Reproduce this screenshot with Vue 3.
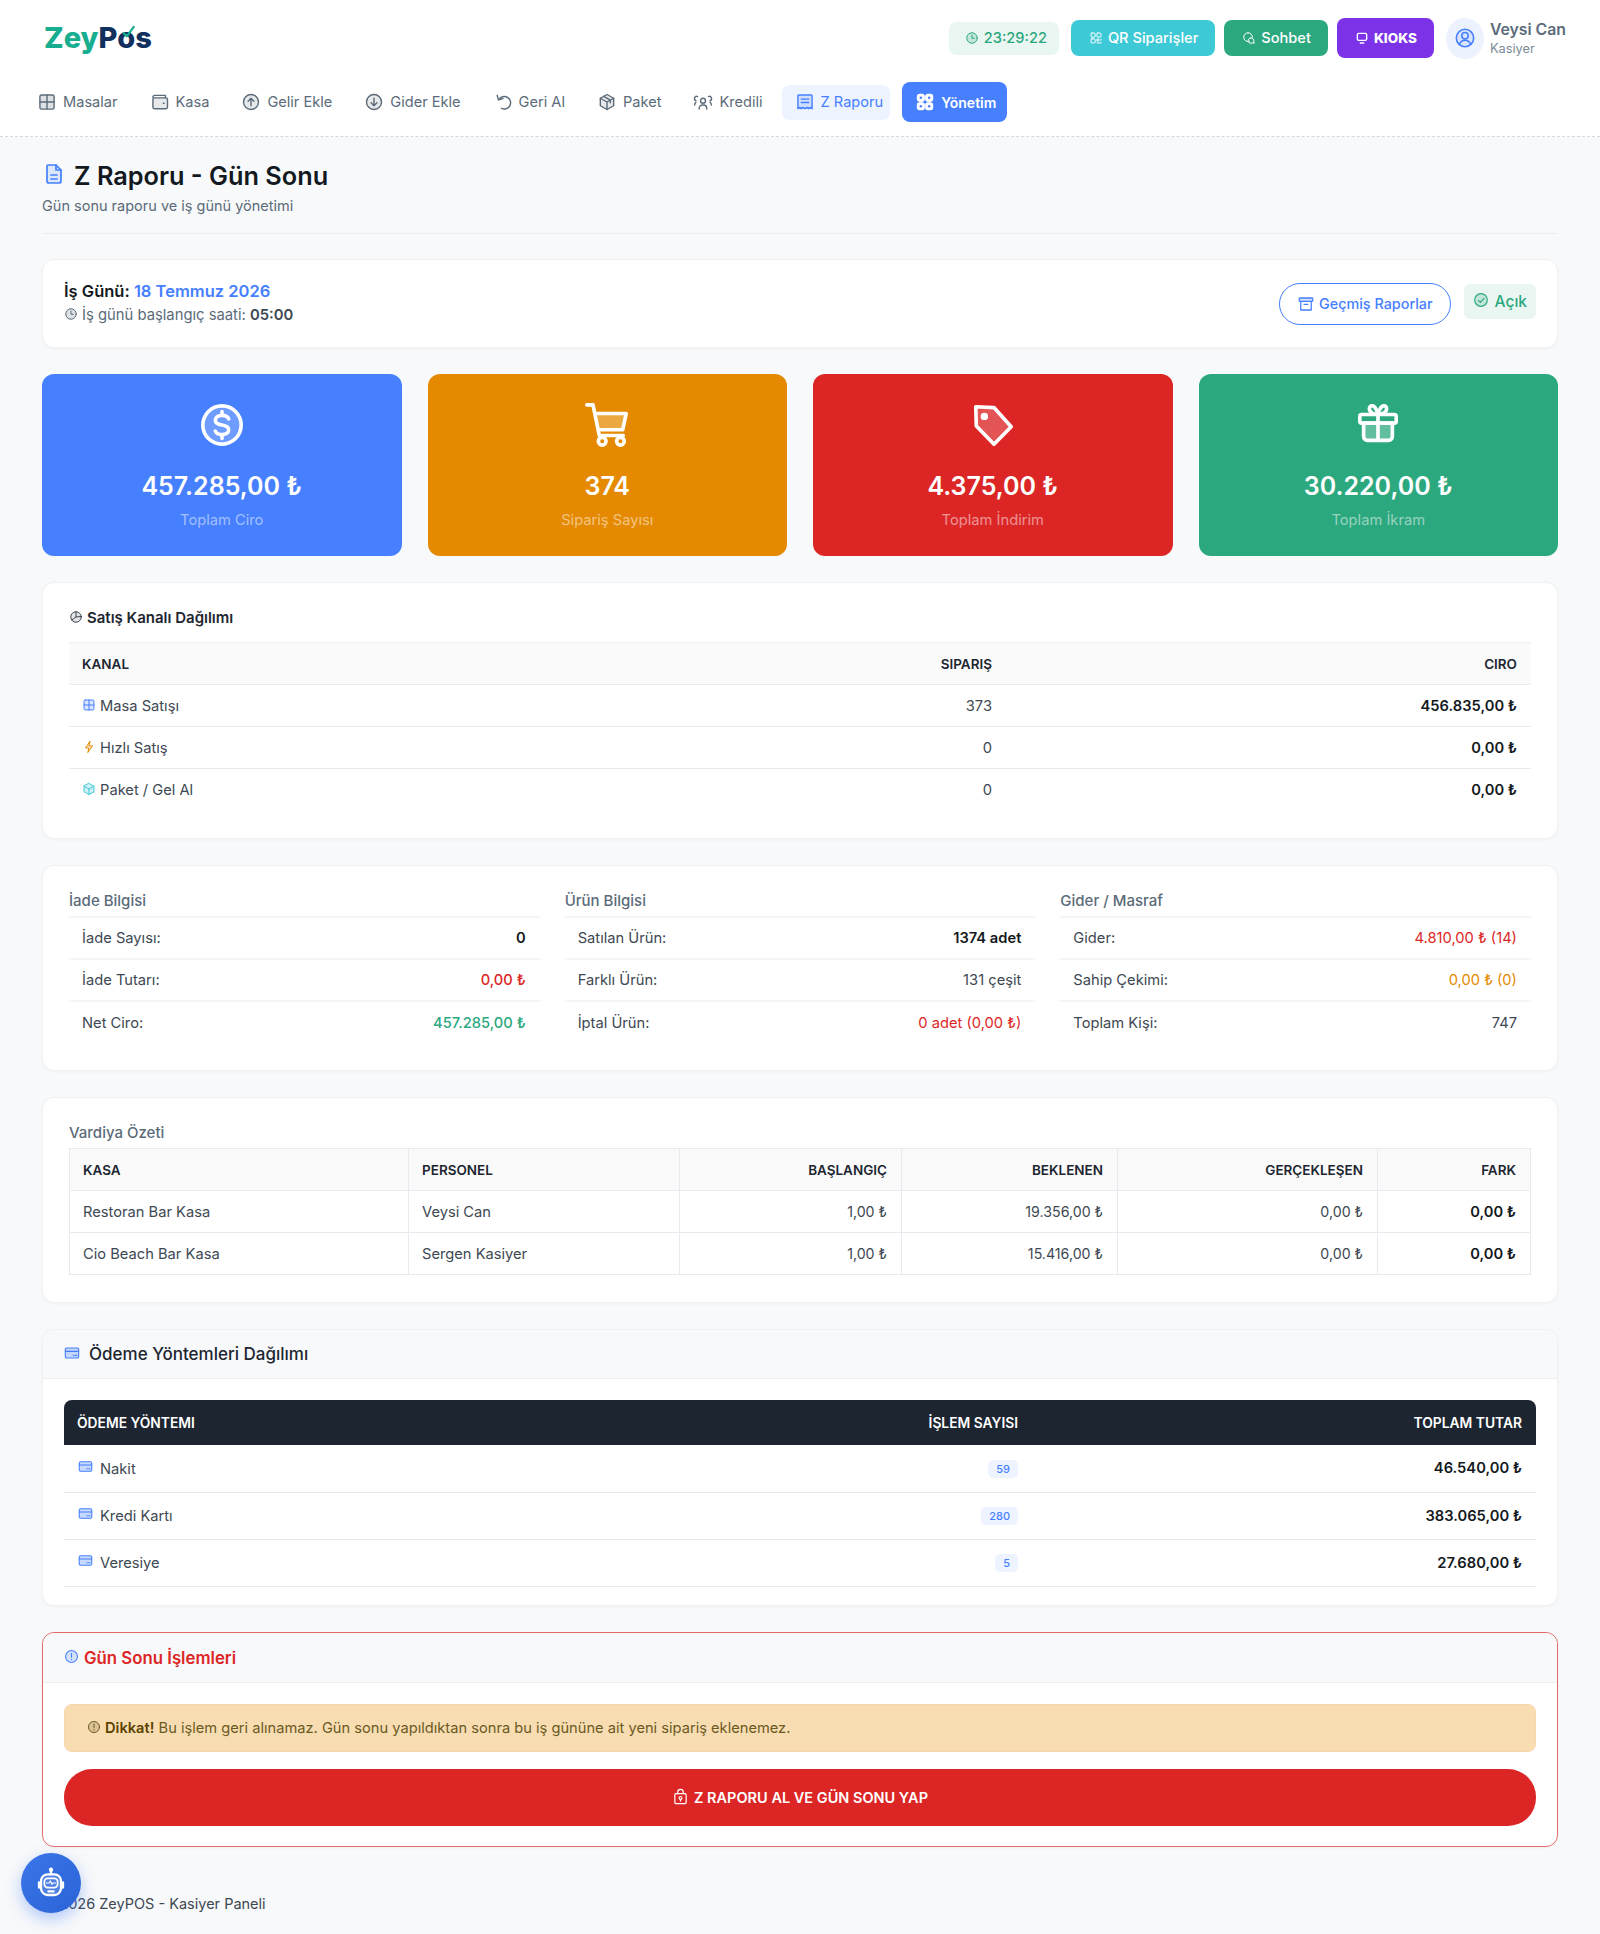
<template>
  <div class="page">
    <header class="header">
      <div class="topbar">
        <div class="logo">
          <span class="logo__zey">Zey</span><span class="logo__pos">P<span class="logo__o">o<svg viewBox="0 0 24 24"><path d="M6 13l5 5L22 3" /></svg></span>s</span>
        </div>
        <div class="topbar__right">
          <div class="clock"><svg class="ico" viewBox="0 0 24 24" v-html="icons.clock" />23:29:22</div>
          <a class="top-btn top-btn--cyan"><svg class="ico" viewBox="0 0 24 24" v-html="icons.qr" />QR Siparişler</a>
          <a class="top-btn top-btn--green"><svg class="ico" viewBox="0 0 24 24" v-html="icons.chat" />Sohbet</a>
          <a class="top-btn top-btn--purple"><svg class="ico" viewBox="0 0 24 24" v-html="icons.screen" />KIOKS</a>
          <div class="avatar"><svg viewBox="0 0 24 24" v-html="icons.user" /></div>
          <div class="user">
            <div class="user__name">Veysi Can</div>
            <div class="user__role">Kasiyer</div>
          </div>
        </div>
      </div>
      <nav class="nav">
        <a
          v-for="item in navItems"
          :key="item.label"
          class="nav__item"
          :class="item.cls"
        >
          <svg class="nav__ico" viewBox="0 0 24 24" v-html="icons[item.icon]" />
          {{ item.label }}
        </a>
      </nav>
    </header>

    <main class="main">
      <div class="title-block">
        <h1 class="title"><svg class="title__ico" viewBox="0 0 24 24" v-html="icons.doc" />Z Raporu - Gün Sonu</h1>
        <p class="subtitle">Gün sonu raporu ve iş günü yönetimi</p>
      </div>

      <section class="card day">
        <div>
          <div class="day__title">İş Günü: <span class="blue">18 Temmuz 2026</span></div>
          <div class="day__sub"><svg class="ico-sm" viewBox="0 0 24 24" v-html="icons.clock" />İş günü başlangıç saati: <b>05:00</b></div>
        </div>
        <div class="day__actions">
          <a class="outline-btn"><svg viewBox="0 0 24 24" v-html="icons.archive" />Geçmiş Raporlar</a>
          <span class="open-tag"><svg viewBox="0 0 24 24" v-html="icons.check" />Açık</span>
        </div>
      </section>

      <div class="stats">
        <div v-for="s in stats" :key="s.label" class="stat" :class="s.cls">
          <svg class="stat__ico" viewBox="0 0 24 24" v-html="icons[s.icon]" />
          <div class="stat__value">{{ s.value }}</div>
          <div class="stat__label">{{ s.label }}</div>
        </div>
      </div>

      <section class="card pad channels">
        <h6 class="sec-title"><svg class="ico-sm" viewBox="0 0 24 24" v-html="icons.pie" />Satış Kanalı Dağılımı</h6>
        <table class="tbl">
          <colgroup>
            <col class="c-channel" />
            <col class="c-orders" />
            <col />
          </colgroup>
          <thead>
            <tr>
              <th>KANAL</th>
              <th class="r">SIPARIŞ</th>
              <th class="r">CIRO</th>
            </tr>
          </thead>
          <tbody>
            <tr v-for="c in channels" :key="c.name">
              <td><svg class="ico-sm" :class="c.color" viewBox="0 0 24 24" v-html="icons[c.icon]" />{{ c.name }}</td>
              <td class="r">{{ c.orders }}</td>
              <td class="r strong">{{ c.total }}</td>
            </tr>
          </tbody>
        </table>
      </section>

      <section class="card pad info">
        <div v-for="col in infoCols" :key="col.title" class="info__col">
          <div class="info__title">{{ col.title }}</div>
          <div v-for="row in col.rows" :key="row.label" class="info__row">
            <span>{{ row.label }}</span>
            <span :class="row.cls">{{ row.value }}</span>
          </div>
        </div>
      </section>

      <section class="card pad shifts">
        <div class="info__title info__title--plain">Vardiya Özeti</div>
        <table class="tbl tbl--bordered">
          <colgroup>
            <col class="c-kasa" />
            <col class="c-person" />
            <col class="c-start" />
            <col class="c-expected" />
            <col class="c-actual" />
            <col />
          </colgroup>
          <thead>
            <tr>
              <th>KASA</th>
              <th>PERSONEL</th>
              <th class="r">BAŞLANGIÇ</th>
              <th class="r">BEKLENEN</th>
              <th class="r">GERÇEKLEŞEN</th>
              <th class="r">FARK</th>
            </tr>
          </thead>
          <tbody>
            <tr v-for="s in shifts" :key="s.kasa">
              <td>{{ s.kasa }}</td>
              <td>{{ s.person }}</td>
              <td class="r">{{ s.start }}</td>
              <td class="r">{{ s.expected }}</td>
              <td class="r">{{ s.actual }}</td>
              <td class="r strong">{{ s.diff }}</td>
            </tr>
          </tbody>
        </table>
      </section>

      <section class="card payments">
        <div class="card__head card__head--pay">
          <svg class="card__ico" viewBox="0 0 24 24" v-html="icons.card" />Ödeme Yöntemleri Dağılımı
        </div>
        <div class="card__body">
          <table class="tbl tbl--dark">
            <colgroup>
              <col class="c-method" />
              <col class="c-count" />
              <col />
            </colgroup>
            <thead>
              <tr>
                <th>ÖDEME YÖNTEMI</th>
                <th class="r">İŞLEM SAYISI</th>
                <th class="r">TOPLAM TUTAR</th>
              </tr>
            </thead>
            <tbody>
              <tr v-for="p in payments" :key="p.name">
                <td><svg class="ico-pay" viewBox="0 0 24 24" v-html="icons.card" />{{ p.name }}</td>
                <td class="r"><span class="count">{{ p.count }}</span></td>
                <td class="r strong">{{ p.total }}</td>
              </tr>
            </tbody>
          </table>
        </div>
      </section>

      <section class="card closing">
        <div class="card__head card__head--red">
          <svg class="ico-info" viewBox="0 0 24 24" v-html="icons.info" />Gün Sonu İşlemleri
        </div>
        <div class="card__body closing__body">
          <div class="alert">
            <svg class="ico-sm" viewBox="0 0 24 24" v-html="icons.info" /><b>Dikkat!</b> Bu işlem geri alınamaz. Gün sonu yapıldıktan sonra bu iş gününe ait yeni sipariş eklenemez.
          </div>
          <button class="close-btn"><svg viewBox="0 0 24 24" v-html="icons.lock" />Z RAPORU AL VE GÜN SONU YAP</button>
        </div>
      </section>

      <footer class="footer">© 2026 ZeyPOS - Kasiyer Paneli</footer>
    </main>

    <button class="bot">
      <svg viewBox="0 0 24 24" v-html="icons.bot" />
    </button>
  </div>
</template>

<script setup>
const icons = {
  grid: '<rect x="3.5" y="3.5" width="17" height="17" rx="2" fill="currentColor" fill-opacity=".2"/><path d="M3.5 12h17M12 3.5v17"/>',
  wallet: '<path d="M3.500 6.500A2.500 2.500 0 0 1 6 4h12.500v3" /><rect x="3.500" y="7" width="17.500" height="13" rx="2" fill="currentColor" fill-opacity=".15"/><path d="M16 13.500h1"/>',
  up: '<circle cx="12" cy="12" r="9" fill="currentColor" fill-opacity=".15"/><path d="M12 16.500v-9M8.500 11 12 7.500l3.500 3.500"/>',
  down: '<circle cx="12" cy="12" r="9" fill="currentColor" fill-opacity=".15"/><path d="M12 7.500v9M8.500 13l3.500 3.500 3.500-3.500"/>',
  undo: '<path d="M5 4l1.500 5.500L12 8"/><path d="M7.200 9A7.500 7.500 0 1 1 10 19.500"/>',
  box: '<path d="M12 3l8 4.500v9L12 21l-8-4.500v-9z" fill="currentColor" fill-opacity=".15"/><path d="M4 7.500l8 4.500 8-4.500M12 12v9M8 5.200l8 4.600v3"/>',
  users: '<circle cx="12" cy="10.500" r="3"/><path d="M7.500 20.500v-1a4 4 0 0 1 4-4h1a4 4 0 0 1 4 4v1"/><path d="M3.500 10.500a2.500 2.500 0 0 1 2-5M2 15.500c0-1.500.5-2.500 1.500-3M20.500 10.500a2.500 2.500 0 0 0-2-5M22 15.500c0-1.500-.5-2.500-1.500-3"/>',
  receipt: '<path d="M3.500 4.500a1 1 0 0 1 1-1h15a1 1 0 0 1 1 1V20l-2-1.500-2 1.500-2-1.500-2.500 1.500-2.500-1.500-2 1.500-2-1.500-2 1.500z" fill="currentColor" fill-opacity=".18"/><path d="M7.500 8.500h9M7.500 12.500h9"/>',
  apps: '<rect x="3" y="3" width="8" height="8" rx="2.500" fill="currentColor"/><rect x="13" y="3" width="8" height="8" rx="2.500" fill="currentColor"/><rect x="3" y="13" width="8" height="8" rx="2.500" fill="currentColor"/><rect x="13" y="13" width="8" height="8" rx="2.500" fill="currentColor"/><circle cx="7" cy="7" r="1.500" fill="#4680ff" stroke="none"/><circle cx="17" cy="7" r="1.500" fill="#4680ff" stroke="none"/><circle cx="7" cy="17" r="1.500" fill="#4680ff" stroke="none"/><circle cx="17" cy="17" r="1.500" fill="#4680ff" stroke="none"/>',
  clock: '<circle cx="12" cy="12" r="9" fill="currentColor" fill-opacity=".2"/><path d="M12 7v5.500h4"/>',
  qr: '<rect x="3.500" y="3.500" width="7" height="7" rx="1.500"/><rect x="13.500" y="3.500" width="7" height="7" rx="1.500"/><rect x="3.500" y="13.500" width="7" height="7" rx="1.500"/><path d="M14 14h3v3h-3zM20.500 14v2M14 20.500h6.500v-1"/>',
  chat: '<path d="M10.500 3a7.500 7.500 0 1 0 0 15c1 0 1.500 0 2.500-.5"/><path d="M10.500 3a7.500 7.500 0 0 1 7.500 7.500" /><path d="M15 12a4.500 4.500 0 1 0 2.500 8.200L21 21l-.9-3.200A4.500 4.500 0 0 0 15 12z"/>',
  screen: '<rect x="4" y="4" width="16" height="12" rx="2.500" stroke-width="2.400"/><path d="M9 20.500h6" stroke-width="2.400"/>',
  user: '<circle cx="12" cy="12" r="9.500" fill="currentColor" fill-opacity=".12"/><circle cx="12" cy="9.500" r="3.500"/><path d="M6 19c.8-3 3-4.500 6-4.500s5.200 1.500 6 4.500"/>',
  doc: '<path d="M6 3h8l5 5v11a2 2 0 0 1-2 2H7a2 2 0 0 1-2-2V4a1 1 0 0 1 1-1z" fill="currentColor" fill-opacity=".15"/><path d="M14 3v5h5M9 13h6M9 17h6"/>',
  archive: '<rect x="3" y="4" width="18" height="4.500" rx="1" fill="currentColor" fill-opacity=".25"/><path d="M5 8.500V20h14V8.500M9.500 12.500h5"/>',
  check: '<circle cx="12" cy="12" r="9.500" fill="currentColor" fill-opacity=".2"/><path d="M8 12.500l3 3 5.500-6"/>',
  dollar: '<circle cx="12" cy="12" r="10" fill="currentColor" fill-opacity=".22"/><path d="M15.500 8.800C15 7.600 13.700 7 12 7c-2 0-3.500 1-3.500 2.500S10 11.700 12 12s3.500 1 3.500 2.500S14 17 12 17c-1.700 0-3-.6-3.500-1.800M12 5v2M12 17v2"/>',
  cart: '<path d="M6.500 6H22l-1.800 8.500H8z" fill="currentColor" fill-opacity=".25" stroke="none"/><path d="M1.500 1.500h3.200L8 17.500h12.500M6 6h16l-1.800 8.500H8"/><circle cx="9.500" cy="20.500" r="2"/><circle cx="19" cy="20.500" r="2"/>',
  tag: '<path d="M3 2.500l9.500.4 9 10L12.500 22 3.300 12.500z" fill="currentColor" fill-opacity=".22"/><circle cx="7.500" cy="7.500" r="1" fill="currentColor"/>',
  gift: '<g transform="translate(0 -1)"><path d="M4.500 12h15v7a2 2 0 0 1-2 2h-11a2 2 0 0 1-2-2z" fill="currentColor" fill-opacity=".25"/><rect x="2.500" y="7.500" width="19" height="4.500" rx="1"/><path d="M12 7.500V21M12 7.500C10 7.500 7.500 6.500 7.500 4.500S10.500 1.500 12 7.500M12 7.500c2 0 4.500-1 4.500-3S13.500 1.500 12 7.500"/></g>',
  pie: '<circle cx="12" cy="12" r="9" fill="currentColor" fill-opacity=".15"/><path d="M12 3v9l-7 5M12 12l9-1"/>',
  bolt: '<path d="M13.500 2.500 6 13.500h5.500L10 21.500l8-11.500h-5.500z" fill="currentColor" fill-opacity=".2"/>',
  cube: '<path d="M12 2.500l8.500 4.800v9.500L12 21.500l-8.500-4.700V7.300z" fill="currentColor" fill-opacity=".25"/><path d="M3.500 7.300 12 12l8.500-4.700M12 12v9.500"/>',
  card: '<rect x="2" y="4.500" width="20" height="15" rx="2" fill="currentColor" fill-opacity=".3"/><path d="M2 9.500h20M14 15.500h1M17 15.500h2"/>',
  info: '<circle cx="12" cy="12" r="9.500" fill="currentColor" fill-opacity=".2"/><path d="M12 7v6M12 16.500v.5"/>',
  lock: '<rect x="4" y="8" width="16" height="14" rx="1.500"/><path d="M8 8V6a4 4 0 0 1 8 0v2"/><circle cx="12" cy="14" r="2"/><path d="M12 16v2.500"/>',
  bot: '<path d="M12 2.500v3" /><circle cx="12" cy="2" r=".8" fill="currentColor"/><rect x="4.500" y="5.500" width="15" height="15.500" rx="5" fill="currentColor" fill-opacity=".15"/><path d="M3 11.500v4M21 11.500v4"/><rect x="7" y="8.500" width="10" height="7" rx="2.500" stroke-width="1.300"/><path d="M8.500 12h2l1-1.500 1.200 2.500.8-1h2" stroke-width=".9"/><path d="M10 18.200h4" />',
}

const navItems = [
  { label: 'Masalar', icon: 'grid' },
  { label: 'Kasa', icon: 'wallet' },
  { label: 'Gelir Ekle', icon: 'up' },
  { label: 'Gider Ekle', icon: 'down' },
  { label: 'Geri Al', icon: 'undo' },
  { label: 'Paket', icon: 'box' },
  { label: 'Kredili', icon: 'users' },
  { label: 'Z Raporu', icon: 'receipt', cls: 'nav__item--soft' },
  { label: 'Yönetim', icon: 'apps', cls: 'nav__item--active' },
]

const stats = [
  { value: '457.285,00 ₺', label: 'Toplam Ciro', icon: 'dollar', cls: 'stat--blue' },
  { value: '374', label: 'Sipariş Sayısı', icon: 'cart', cls: 'stat--orange' },
  { value: '4.375,00 ₺', label: 'Toplam İndirim', icon: 'tag', cls: 'stat--red' },
  { value: '30.220,00 ₺', label: 'Toplam İkram', icon: 'gift', cls: 'stat--green' },
]

const channels = [
  { name: 'Masa Satışı', orders: 373, total: '456.835,00 ₺', icon: 'grid', color: 'blue' },
  { name: 'Hızlı Satış', orders: 0, total: '0,00 ₺', icon: 'bolt', color: 'orange' },
  { name: 'Paket / Gel Al', orders: 0, total: '0,00 ₺', icon: 'cube', color: 'cyan' },
]

const infoCols = [
  {
    title: 'İade Bilgisi',
    rows: [
      { label: 'İade Sayısı:', value: '0', cls: 'strong' },
      { label: 'İade Tutarı:', value: '0,00 ₺', cls: 'text-red med' },
      { label: 'Net Ciro:', value: '457.285,00 ₺', cls: 'text-green med' },
    ],
  },
  {
    title: 'Ürün Bilgisi',
    rows: [
      { label: 'Satılan Ürün:', value: '1374 adet', cls: 'strong' },
      { label: 'Farklı Ürün:', value: '131 çeşit' },
      { label: 'İptal Ürün:', value: '0 adet (0,00 ₺)', cls: 'text-red' },
    ],
  },
  {
    title: 'Gider / Masraf',
    rows: [
      { label: 'Gider:', value: '4.810,00 ₺ (14)', cls: 'text-red' },
      { label: 'Sahip Çekimi:', value: '0,00 ₺ (0)', cls: 'text-orange' },
      { label: 'Toplam Kişi:', value: '747' },
    ],
  },
]

const shifts = [
  { kasa: 'Restoran Bar Kasa', person: 'Veysi Can', start: '1,00 ₺', expected: '19.356,00 ₺', actual: '0,00 ₺', diff: '0,00 ₺' },
  { kasa: 'Cio Beach Bar Kasa', person: 'Sergen Kasiyer', start: '1,00 ₺', expected: '15.416,00 ₺', actual: '0,00 ₺', diff: '0,00 ₺' },
]

const payments = [
  { name: 'Nakit', count: 59, total: '46.540,00 ₺' },
  { name: 'Kredi Kartı', count: 280, total: '383.065,00 ₺' },
  { name: 'Veresiye', count: 5, total: '27.680,00 ₺' },
]
</script>

<style>
body {
  background: #f8f9fa;
}
</style>

<style scoped>
.page {
  font-family: Inter, "Noto Sans", sans-serif;
  font-size: 14.7px;
  color: #1d2630;
  height: 1934px;
  overflow: hidden;
  position: relative;
}

svg {
  fill: none;
  stroke: currentColor;
  stroke-width: 1.7;
  stroke-linecap: round;
  stroke-linejoin: round;
  flex-shrink: 0;
}

/* header */
.header {
  background: #fff;
  height: 137px;
  border-bottom: 1px dashed #d4d8dc;
  padding: 18px 34px 0 24px;
  box-sizing: border-box;
}

.topbar {
  display: flex;
  align-items: center;
  justify-content: space-between;
  height: 40px;
}

.logo {
  margin-left: 20px;
  font-weight: 800;
  font-size: 29px;
  line-height: 1;
  margin-top: -2px;
}

.logo__zey {
  color: #17ad8f;
}

.logo__pos {
  color: #12305e;
}

.logo__o {
  position: relative;
}

.logo__o svg {
  position: absolute;
  left: 3px;
  top: 5px;
  width: 15px;
  height: 15px;
  stroke: #17ad8f;
  stroke-width: 3.500;
}

.topbar__right {
  display: flex;
  align-items: center;
}

.ico {
  width: 14px;
  height: 14px;
  margin-right: 5px;
}

.clock {
  display: flex;
  align-items: center;
  height: 33px;
  padding: 0 12px 0 16px;
  margin-right: 12px;
  border-radius: 7px;
  background: #eaf6f2;
  color: #2ca87f;
  font-size: 14.6px;
  font-weight: 500;
}

.top-btn {
  display: flex;
  align-items: center;
  height: 36px;
  padding: 0 17px 0 18px;
  margin-right: 9px;
  border-radius: 8px;
  color: #fff;
  font-size: 14.6px;
  font-weight: 500;
}

.top-btn--cyan {
  background: #3ec9d6;
}

.top-btn--green {
  background: #2ca87f;
}

.top-btn--purple {
  height: 40px;
  margin-right: 12px;
  background: #7c32e6;
  font-size: 13.500px;
  font-weight: 800;
}

.avatar {
  width: 38px;
  height: 41px;
  border-radius: 50%;
  background: #edf2ff;
  color: #4680ff;
  display: flex;
  align-items: center;
  justify-content: center;
  margin-right: 6px;
}

.avatar svg {
  width: 22px;
  height: 22px;
}

.user__name {
  font-size: 15.800px;
  font-weight: 600;
  color: #5b6b79;
  line-height: 21px;
}

.user__role {
  font-size: 12.800px;
  color: #7b8a96;
  line-height: 18px;
}

.nav {
  display: flex;
  align-items: center;
  gap: 12px;
  margin-top: 24px;
}

.nav__item {
  display: flex;
  align-items: center;
  height: 35px;
  padding: 0 7px 0 13px;
  border-radius: 8px;
  font-size: 14.600px;
  color: #5b6b79;
}

.nav__ico {
  width: 20px;
  height: 20px;
  margin-right: 6px;
}

.nav__item--soft {
  background: #edf3ff;
  color: #4680ff;
}

.nav__item--active {
  height: 40px;
  background: #4680ff;
  color: #fff;
  font-size: 14px;
  font-weight: 600;
  padding: 0 11px 0 13px;
}

/* main */
.main {
  padding: 0 42px;
}

.title-block {
  height: 97px;
  border-bottom: 1px solid #eceef0;
  padding-top: 23px;
  box-sizing: border-box;
  margin-bottom: 25px;
}

.title {
  margin: 0;
  display: flex;
  align-items: center;
  font-size: 25.300px;
  line-height: 32px;
  font-weight: 600;
  color: #131920;
}

.title__ico {
  width: 24px;
  height: 24px;
  color: #4680ff;
  margin-right: 8px;
  margin-top: -4px;
}

.subtitle {
  margin: 5px 0 0;
  font-size: 14.500px;
  color: #5b6b79;
}

.card {
  background: #fff;
  border: 1px solid #eff1f3;
  border-radius: 12px;
  box-shadow: 0 1px 3px rgba(27, 46, 94, 0.04);
  margin-bottom: 26px;
  box-sizing: border-box;
}

.pad {
  padding: 22px 26px;
}

.day {
  height: 89px;
  padding: 0 21px;
  display: flex;
  align-items: center;
  justify-content: space-between;
}

.day__title {
  font-size: 16.500px;
  font-weight: 600;
  color: #131920;
  line-height: 24px;
  margin-top: -1px;
}

.blue {
  color: #4680ff;
}

.orange {
  color: #e58a00;
}

.cyan {
  color: #3ec9d6;
}

.day__sub {
  font-size: 14.800px;
  color: #5b6b79;
  line-height: 24px;
}

.day__sub b {
  font-weight: 600;
  color: #3e4853;
}

.ico-sm {
  width: 14px;
  height: 14px;
  margin-right: 4px;
  vertical-align: -1px;
}

.day__actions {
  display: flex;
  align-items: center;
  gap: 13px;
}

.outline-btn {
  display: flex;
  align-items: center;
  height: 42px;
  padding: 0 17px;
  border: 1px solid #4680ff;
  border-radius: 21px;
  color: #4680ff;
  font-weight: 500;
  font-size: 14.400px;
  box-sizing: border-box;
}

.outline-btn svg {
  width: 18px;
  height: 18px;
  margin-right: 4px;
}

.open-tag {
  display: flex;
  align-items: center;
  height: 35px;
  padding: 0 9px;
  margin-top: -4px;
  border-radius: 6px;
  background: #eaf6f2;
  color: #2ca87f;
  font-size: 15.500px;
  font-weight: 500;
}

.open-tag svg {
  width: 16px;
  height: 16px;
  margin-right: 6px;
  margin-top: -3px;
}

.stats {
  display: grid;
  grid-template-columns: repeat(4, 1fr);
  gap: 26px;
  margin-bottom: 26px;
}

.stat {
  height: 182px;
  border-radius: 12px;
  color: #fff;
  display: flex;
  flex-direction: column;
  align-items: center;
  padding-top: 28px;
  box-sizing: border-box;
}

.stat__ico {
  width: 46px;
  height: 46px;
  stroke-width: 1.900;
}

.stat__value {
  margin-top: 21px;
  font-size: 25px;
  line-height: 34px;
  font-weight: 600;
}

.stat__label {
  margin-top: 8px;
  font-size: 14.700px;
  color: rgba(255, 255, 255, 0.5);
}

.stat--blue {
  background: #4680ff;
}

.stat--orange {
  background: #e58a00;
}

.stat--red {
  background: #dc2626;
}

.stat--green {
  background: #2ca87f;
}

.sec-title {
  margin: 0 0 14px;
  font-size: 15px;
  line-height: 20px;
  font-weight: 600;
  color: #1d2630;
}

.sec-title .ico-sm {
  color: #3e4853;
}

.channels {
  height: 257px;
  padding-top: 25px;
}

.tbl {
  width: 100%;
  border-collapse: collapse;
  table-layout: fixed;
}

.tbl th {
  height: 42px;
  box-sizing: border-box;
  padding: 0 14px 0 13px;
  font-size: 13.500px;
  font-weight: 600;
  text-align: left;
  color: #1d2630;
  background: #fafafb;
  border-top: 1px solid #f0f1f3;
  border-bottom: 1px solid #e7eaee;
}

.tbl td {
  height: 42px;
  box-sizing: border-box;
  padding: 0 14px 0 13px;
  color: #3e4853;
  border-bottom: 1px solid #e7eaee;
}

.tbl tbody tr:last-child td {
  border-bottom: none;
}

.tbl th.r,
.tbl td.r {
  text-align: right;
}

.c-channel {
  width: 300px;
}

.c-orders {
  width: 637px;
}

.c-kasa {
  width: 339px;
}

.c-person {
  width: 271px;
}

.c-start {
  width: 222px;
}

.c-expected {
  width: 216px;
}

.c-actual {
  width: 260px;
}

.c-method {
  width: 600px;
}

.c-count {
  width: 368px;
}

.strong {
  font-weight: 600;
  color: #131920 !important;
}

.info {
  height: 206px;
  display: grid;
  grid-template-columns: repeat(3, 1fr);
  gap: 25px;
}

.info__title {
  font-size: 15px;
  font-weight: 500;
  color: #5b6b79;
  height: 30px;
  line-height: 26px;
  box-sizing: border-box;
  border-bottom: 2px solid #f3f5f7;
}

.info__title--plain {
  border-bottom: none;
  height: 20px;
  line-height: 20px;
  margin-bottom: 5px;
}

.info__row {
  display: flex;
  justify-content: space-between;
  align-items: center;
  height: 42px;
  padding: 0 14px 0 13px;
  border-bottom: 2px solid #f3f5f7;
  color: #3e4853;
  box-sizing: border-box;
}

.info__row:last-child {
  border-bottom: none;
}

.text-red {
  color: #dc2626;
}

.text-green {
  color: #2ca87f;
}

.text-orange {
  color: #e58a00;
}

.med {
  font-weight: 500;
}

.shifts {
  height: 206px;
  padding-top: 25px;
}

.tbl--bordered th,
.tbl--bordered td {
  border: 1px solid #e7eaee;
}

.tbl--bordered td.r {
  font-size: 14.200px;
}

.tbl--bordered td.strong {
  font-size: 14.700px;
}

.tbl--bordered th {
  background: #fafafb;
}

.tbl--bordered tbody tr:last-child td {
  border-bottom: 1px solid #e7eaee;
}

.card__head {
  height: 49px;
  background: #f8f9fa;
  border-bottom: 1px solid #eceef0;
  border-radius: 12px 12px 0 0;
  display: flex;
  align-items: center;
  padding: 0 21px;
  font-size: 17px;
  font-weight: 500;
  color: #1d2630;
}

.card__head--pay {
  height: 48px;
}

.card__ico {
  width: 16px;
  height: 16px;
  color: #4680ff;
  margin-right: 9px;
  margin-top: -3px;
}

.card__body {
  padding: 21px;
}

.payments {
  height: 277px;
}

.tbl--dark th {
  height: 45px;
  background: #1d2630;
  color: #fff;
  border: none;
  font-size: 13.800px;
}

.tbl--dark th:first-child {
  border-radius: 8px 0 0 0;
}

.tbl--dark th:last-child {
  border-radius: 0 8px 0 0;
}

.tbl--dark td {
  height: 47px;
  border-bottom: 1px solid #e7eaee;
}

.tbl--dark tbody tr:last-child td {
  border-bottom: 1px solid #e7eaee;
}

.ico-pay {
  width: 15px;
  height: 15px;
  color: #4680ff;
  margin: 0 7px 0 1px;
  vertical-align: 0;
}

.count {
  display: inline-block;
  padding: 2px 8px;
  border-radius: 5px;
  background: #edf3ff;
  color: #4680ff;
  font-size: 11px;
  font-weight: 500;
}

.closing {
  height: 215px;
  border: 1px solid #e46a6a;
  margin-bottom: 0;
}

.card__head--red {
  height: 49px;
  color: #dc2626;
  font-size: 16.800px;
  font-weight: 600;
}

.ico-info {
  width: 15px;
  height: 15px;
  color: #4680ff;
  margin-right: 5px;
  margin-top: -3px;
}

.closing__body {
  padding-top: 21px;
}

.alert {
  height: 48px;
  line-height: 46px;
  background: #f8dcb2;
  border: 1px solid #f7d8a6;
  border-radius: 8px;
  box-sizing: border-box;
  padding: 0 22px;
  color: #6b5a1e;
  font-size: 14.660px;
}

.alert b {
  color: #5c4300;
  font-weight: 600;
}

.close-btn {
  display: flex;
  align-items: center;
  justify-content: center;
  width: 100%;
  height: 57px;
  margin-top: 17px;
  border: none;
  border-radius: 28px;
  background: #dc2626;
  color: #fff;
  font: inherit;
  font-size: 14.500px;
  font-weight: 600;
}

.close-btn svg {
  width: 17px;
  height: 17px;
  margin-right: 5px;
  margin-top: -3px;
}

.footer {
  margin-top: 47px;
  font-size: 14.500px;
  color: #3e4853;
  line-height: 20px;
}

.bot {
  position: absolute;
  left: 21px;
  top: 1853px;
  width: 60px;
  height: 60px;
  border: none;
  padding: 0;
  border-radius: 50%;
  background: linear-gradient(135deg, #3a76ea, #2a63d6);
  box-shadow: 0 6px 16px rgba(70, 128, 255, 0.4);
  color: #fff;
  display: flex;
  align-items: center;
  justify-content: center;
}

.bot svg {
  width: 32px;
  height: 32px;
}
</style>
